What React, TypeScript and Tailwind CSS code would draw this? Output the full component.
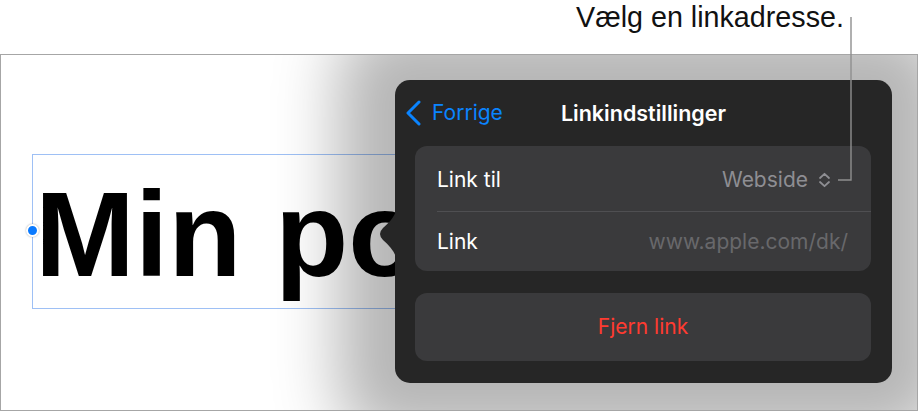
import React from 'react'

const ui = { fontFamily: 'Inter, "Noto Sans", sans-serif' }
const helv = { fontFamily: '"Liberation Sans", Arial, sans-serif' }

function BackChevron(): React.ReactElement {
  return (
    <svg width="17" height="26" viewBox="0 0 17 26" fill="none" stroke="#0a84ff" strokeWidth="3" strokeLinecap="round" strokeLinejoin="round" aria-hidden>
      <path d="M14 2 L3 13 L14 24" />
    </svg>
  )
}

function UpDown(): React.ReactElement {
  return (
    <svg width="15" height="16" viewBox="0 0 15 16" fill="none" stroke="#8e8e93" strokeWidth="1.8" strokeLinecap="round" strokeLinejoin="round" aria-hidden>
      <path d="M3 6 L7.5 1.8 L12 6" />
      <path d="M3 10 L7.5 14.2 L12 10" />
    </svg>
  )
}

function Popover(): React.ReactElement {
  return (
    <div
      className="absolute left-[394px] top-[25px] flex h-[303px] w-[497px] flex-col rounded-[15px] bg-[#262626] shadow-[0_0_65px_57px_rgba(0,0,0,0.29)]"
      style={ui}
    >
      {/* arrow */}
      <svg className="absolute left-[-18px] top-[131px]" width="19" height="46" viewBox="0 0 19 46" aria-hidden>
        <path d="M19 0 C17 6 12 12 6 17 Q0 23 6 29 C12 34 17 40 19 46 Z" fill="#262626" />
      </svg>

      <div className="grid h-[66px] grid-cols-[1fr_auto_1fr] items-center">
        <div className="flex items-center gap-[10px] pl-[10px] text-[21px] text-[#0a84ff]">
          <BackChevron />
          <span>Forrige</span>
        </div>
        <div className="text-[21.5px] font-semibold text-white">Linkindstillinger</div>
        <div />
      </div>

      <div className="mx-[20px] w-[456px] overflow-hidden rounded-[12px] bg-[#3a3a3c]">
        <div className="flex h-[65px] items-center justify-between pl-[22px] pr-[39px] pt-[3px] text-[21px]">
          <span className="text-white">Link til</span>
          <span className="flex items-center gap-[9px] text-[#8e8e93]">
            Webside
            <UpDown />
          </span>
        </div>
        <div className="ml-[22px] h-px bg-[#4f4f52]" />
        <div className="flex h-[59px] items-center justify-between pl-[22px] pr-[23px] text-[21px]">
          <span className="text-white">Link</span>
          <span className="text-[#68686b]">www.apple.com/dk/</span>
        </div>
      </div>

      <div className="mx-[20px] mt-[22px] flex h-[68px] w-[456px] items-center justify-center rounded-[12px] bg-[#3a3a3c] text-[21px] text-[#ff3b30]">
        Fjern link
      </div>
    </div>
  )
}

export default function App(): React.ReactElement {
  return (
    <div className="relative h-[412px] w-[918px] overflow-hidden bg-white">
      <div className="flex h-[54px] items-start pl-[576px] pt-[1px]">
        <span className="text-[28.7px] leading-[32px] text-[#111]" style={helv}>
          Vælg en linkadresse.
        </span>
      </div>

      <div className="relative h-[357px] w-[918px] overflow-hidden border border-[#a6a6a6] bg-white">
        <div className="relative ml-[31px] mt-[99px] h-[155px] w-[640px] border border-[#9ec0f5]">
          <div className="whitespace-nowrap pl-[2px] pt-[19px] text-[120px] font-bold leading-none text-black" style={helv}>
            Min po
          </div>
          <span className="absolute left-[-7px] top-[69px] h-[13px] w-[13px] rounded-full border-2 border-white bg-[#0a7aff] shadow-[0_0_2px_rgba(0,0,0,0.35)]" />
        </div>
        <Popover />
      </div>

      <svg className="pointer-events-none absolute left-0 top-0" width="918" height="412" aria-hidden>
        <path d="M851 17 V180 H838" fill="none" stroke="#8f8f8f" strokeWidth="1.4" />
      </svg>
    </div>
  )
}
